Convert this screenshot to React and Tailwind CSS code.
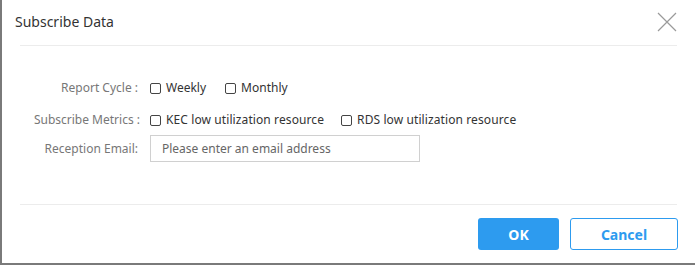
export default function App() {
  const font = { fontFamily: '"Noto Sans", "Open Sans", sans-serif' };
  const Box = () => (
    <span className="inline-block w-[11px] h-[11px] border border-[#444] rounded-[2px] bg-white mr-[5px] shrink-0" />
  );
  return (
    <div className="w-[695px] h-[265px] bg-[#7a7a7a] pl-[2px] pb-[2px]" style={font}>
      <div className="w-full h-full bg-white relative">
        <div className="h-[45px] flex items-center pl-[13px] pr-[18px] justify-between">
          <span className="text-[14px] text-[#333] mt-[-2px]">Subscribe Data</span>
          <svg width="20" height="20" viewBox="0 0 20 20" className="mt-[-2px]">
            <path d="M1 1 L19 19 M19 1 L1 19" stroke="#9a9a9a" strokeWidth="1.2" fill="none" />
          </svg>
        </div>
        <div className="mx-[18px] border-t border-[#ececec]" />
        <div className="pt-[32px] text-[12px]">
          <div className="flex items-center h-[20px]">
            <div className="w-[141px] text-right text-[#777] pr-[5px]">Report Cycle :</div>
            <label className="flex items-center text-[#333] ml-[7px]"><Box />Weekly</label>
            <label className="flex items-center text-[#333] ml-[19px]"><Box />Monthly</label>
          </div>
          <div className="flex items-center h-[20px] mt-[12px]">
            <div className="w-[143px] text-right text-[#777] pr-[5px]">Subscribe Metrics :</div>
            <label className="flex items-center text-[#333] ml-[5px] tracking-[0.1px]"><Box />KEC low utilization resource</label>
            <label className="flex items-center text-[#333] ml-[17px] tracking-[0.1px]"><Box />RDS low utilization resource</label>
          </div>
          <div className="flex items-center mt-[5px]">
            <div className="w-[141px] text-right text-[#777] pr-[5px]">Reception Email:</div>
            <input
              className="ml-[7px] w-[270px] h-[27px] border border-[#d0d0d0] px-[11px] text-[12px] text-[#333] placeholder-[#666] outline-none"
              placeholder="Please enter an email address"
              style={font}
            />
          </div>
        </div>
        <div className="mx-[18px] border-t border-[#ececec] mt-[42px]" />
        <div className="flex justify-end pr-[17px] mt-[13px] gap-[11px]">
          <button className="w-[81px] h-[32px] rounded-[3px] bg-[#2d9bef] text-white text-[14px] font-bold">OK</button>
          <button className="w-[108px] h-[32px] rounded-[3px] border border-[#2d9bef] bg-white text-[#2d9bef] text-[14px] font-bold">Cancel</button>
        </div>
      </div>
    </div>
  );
}
